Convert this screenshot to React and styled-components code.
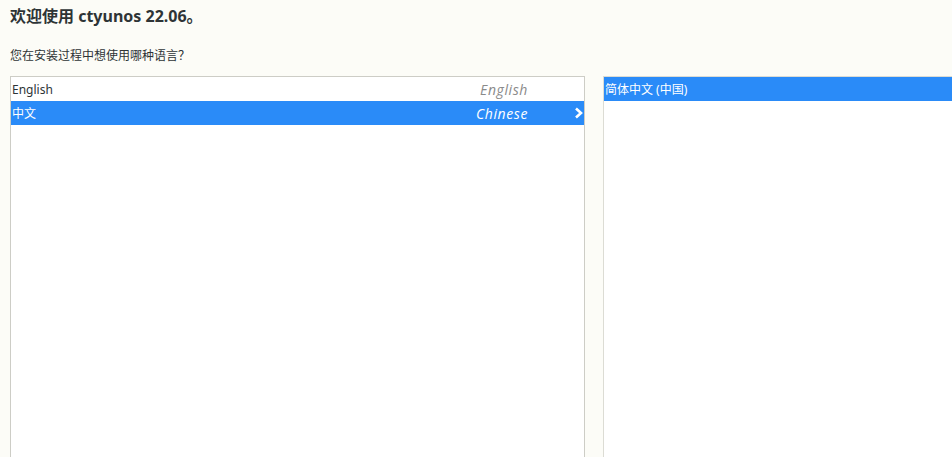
import React from "react";
import styled, { createGlobalStyle } from "styled-components";

const Global = createGlobalStyle`
  html, body { margin: 0; padding: 0; background: #fcfcf7; overflow: hidden; }
  body { font-family: "Noto Sans", "Noto Sans CJK SC", sans-serif; }
`;

const Page = styled.div`
  width: 952px;
  height: 457px;
  overflow: hidden;
  padding: 4px 0 0 10px;
  box-sizing: border-box;
`;

const Title = styled.h1`
  margin: 0;
  font-size: 16px;
  font-weight: 700;
  line-height: 24px;
  color: #2e3436;
  font-family: "Noto Sans", "Noto Sans CJK SC", sans-serif;
`;

const Question = styled.p`
  margin: 18px 0 0 0;
  font-size: 12px;
  line-height: 18px;
  color: #2e3436;
  font-family: "Noto Sans CJK SC", sans-serif;
`;

const Columns = styled.div`
  display: flex;
  gap: 18px;
  margin-top: 12px;
  width: 1400px;
`;

const Panel = styled.div`
  width: ${(p) => p.$w}px;
  height: 420px;
  background: #ffffff;
  border: 1px solid ${(p) => p.$border};
  box-sizing: border-box;
  flex: none;
`;

const Row = styled.div`
  display: flex;
  align-items: center;
  height: 24px;
  background: ${(p) => (p.$sel ? "#2a8bf8" : "transparent")};
  color: ${(p) => (p.$sel ? "#ffffff" : "#2e3436")};
  font-size: 12px;
  padding-left: 1px;
`;

const Name = styled.span`
  flex: 1;
  font-family: "Noto Sans", "Noto Sans CJK SC", sans-serif;
`;

const Native = styled.span`
  font-style: italic;
  font-size: 14px;
  letter-spacing: 0.6px;
  font-weight: 400;
  color: ${(p) => (p.$sel ? "#ffffff" : "#8a8a8a")};
  margin-right: 46px;
  font-family: "Open Sans", "Noto Sans", sans-serif;
`;

const Arrow = styled.svg`
  width: 9px;
  height: 12px;
  margin-right: 1px;
  visibility: ${(p) => (p.$show ? "visible" : "hidden")};
`;

const languages = [
  { name: "English", native: "English" },
  { name: "中文", native: "Chinese", sel: true },
];

export default function App() {
  return (
    <>
      <Global />
      <Page>
        <Title>欢迎使用 ctyunos 22.06。</Title>
        <Question>您在安装过程中想使用哪种语言？</Question>
        <Columns>
          <Panel $w={575} $border="#cdcdc6">
            {languages.map((l) => (
              <Row key={l.name} $sel={l.sel}>
                <Name>{l.name}</Name>
                <Native $sel={l.sel}>{l.native}</Native>
                <Arrow viewBox="0 0 9 12" $show={l.sel}>
                  <path d="M2 1.5 L7 6 L2 10.5" fill="none" stroke="#fff" strokeWidth="2.6" />
                </Arrow>
              </Row>
            ))}
          </Panel>
          <Panel $w={400} $border="#dcdcd4">
            <Row $sel>
              <Name>简体中文 (中国)</Name>
            </Row>
          </Panel>
        </Columns>
      </Page>
    </>
  );
}
